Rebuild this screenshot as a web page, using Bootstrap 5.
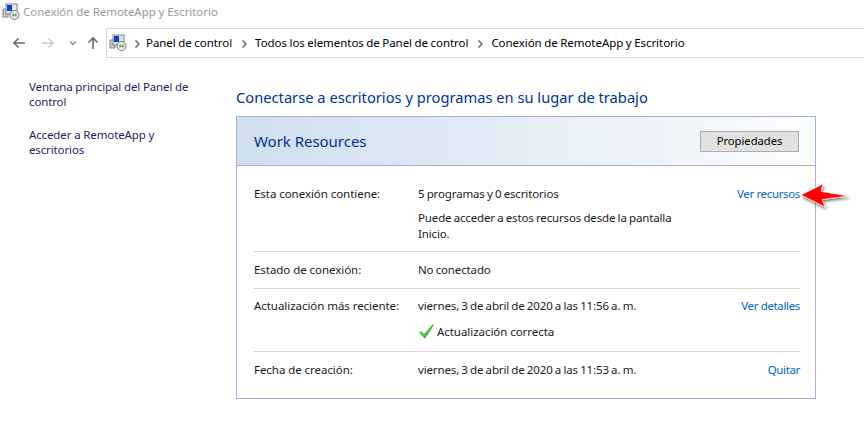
<!DOCTYPE html>
<html lang="es"><head><meta charset="utf-8"><title>Conexión de RemoteApp y Escritorio</title>
<link href="https://cdn.jsdelivr.net/npm/bootstrap@5.3.0/dist/css/bootstrap.min.css" rel="stylesheet">
<style>
html,body{width:864px;height:435px;overflow:hidden;background:#fff}
body{font-family:"Noto Sans","Open Sans",sans-serif;font-size:11.5px;line-height:15px;color:#1a1a1a;letter-spacing:-.05px}
.win-title{height:28px;padding:3px 0 0 2px;color:#9a9a9a;font-size:11.5px;gap:3px;align-items:flex-start}
.win-title span{padding-top:1px}
.nav-strip{height:30px;padding-left:11px}
.nav-btn{width:16px;height:16px;flex:none}
.fwd-btn{margin-left:13px}.drop-btn{margin-left:9px}.up-btn{margin-left:4px}
.addr{border:1px solid #d9d9d9;border-right:0;height:30px;margin-left:5px;padding-left:2px;flex:1;color:#000;font-size:11.5px;word-spacing:-.4px;padding-bottom:1px}
.crumb-sep{width:23px;text-align:center;flex:none}
.crumb-first{width:19px}
.side{width:236px;flex:none;padding:21px 30px 0 29px;color:#2a1a6a;letter-spacing:-.13px}
.side p{margin:0 0 18px}
.main-col{width:580px;flex:none;padding-top:29px}
.head-line{font-size:14.7px;line-height:20px;color:#003399;margin-bottom:9px;letter-spacing:0}
.panel-box{border:1px solid #a9aedb;height:283px;position:relative}
.panel-head{height:49px;border-bottom:1px solid #a9aedb;background:linear-gradient(90deg,#cfdeee,#fbfcfe);padding:0 16px 0 17px}
.panel-name{font-size:15px;color:#003399;letter-spacing:-.03px}
.prop-btn{width:99px;height:21px;border:1px solid #adadad;background:#e1e1e1;color:#000;border-radius:0;padding:0;font-size:11.2px;line-height:18px}
.info-list{padding:0 15px 0 17px}
.info-row{border-bottom:1px solid #d4d4d4;display:grid;grid-template-columns:164px 282px 1fr}
.info-row:last-child{border-bottom:0}
.r1{height:86px;padding-top:20px}.r2{height:37px;padding-top:10px}.r3{height:63px;padding-top:9px}.r4{padding-top:10px}
.info-row p{margin:0}
.mid-text{word-spacing:-.6px;letter-spacing:-.14px}
.gap-line{margin-top:9px!important;line-height:16px}
.act{text-align:right;letter-spacing:-.35px}
.act a{color:#0066cc;text-decoration:none}
.ok-line{display:flex;align-items:center;gap:2px;margin-top:10px!important;margin-left:-5px;word-spacing:0;letter-spacing:-.05px}
.red-arrow{position:absolute;left:563px;top:64px}
</style></head><body>
<div class="win-title d-flex">
<svg width="18" height="18" viewBox="0 0 18 18"><rect x="1" y="6" width="5" height="8" fill="#c9c9c9" stroke="#888"/><rect x="4" y="1" width="11" height="10" fill="#dfe6ef" stroke="#7a8494"/><rect x="5" y="2" width="5" height="6" fill="#1240b8"/><circle cx="12.500" cy="12" r="4.500" fill="#eee" stroke="#777"/><path d="M10 12h1.500M15 12h-1.500M11 10.500l1 1.500-1 1.500M14 10.500l-1 1.500 1 1.500" fill="none" stroke="#2f9e2f"/></svg>
<span>Conexión de RemoteApp y Escritorio</span></div>
<div class="nav-strip d-flex align-items-center">
<svg class="nav-btn" viewBox="0 0 16 16"><path d="M14 8H3M7.500 3.500 3 8l4.500 4.500" fill="none" stroke="#6b6b6b" stroke-width="1.600"/></svg>
<svg class="nav-btn fwd-btn" viewBox="0 0 16 16"><path d="M2 8h11M8.500 3.500 13 8l-4.500 4.500" fill="none" stroke="#c9c9c9" stroke-width="1.600"/></svg>
<svg class="nav-btn drop-btn" viewBox="0 0 16 16"><path d="M5 6.500l3 3 3-3" fill="none" stroke="#8a8a8a" stroke-width="1.300"/></svg>
<svg class="nav-btn up-btn" viewBox="0 0 16 16"><path d="M8 14V3M3.500 7.500 8 3l4.500 4.500" fill="none" stroke="#6b6b6b" stroke-width="1.600"/></svg>
<div class="addr d-flex align-items-center">
<svg width="18" height="18" viewBox="0 0 18 18"><rect x="1" y="6" width="5" height="8" fill="#c9c9c9" stroke="#888"/><rect x="4" y="1" width="11" height="10" fill="#dfe6ef" stroke="#7a8494"/><rect x="5" y="2" width="5" height="6" fill="#1240b8"/><circle cx="12.500" cy="12" r="4.500" fill="#eee" stroke="#777"/><path d="M10 12h1.500M15 12h-1.500M11 10.500l1 1.500-1 1.500M14 10.500l-1 1.500 1 1.500" fill="none" stroke="#2f9e2f"/></svg>
<span class="crumb-sep crumb-first"><svg width="6" height="8" viewBox="0 0 6 8"><path d="M1.500 .5 5 4 1.500 7.500" fill="none" stroke="#666" stroke-width="1.500"/></svg></span>
<span>Panel de control</span>
<span class="crumb-sep"><svg width="6" height="8" viewBox="0 0 6 8"><path d="M1.500 .5 5 4 1.500 7.500" fill="none" stroke="#666" stroke-width="1.500"/></svg></span>
<span>Todos los elementos de Panel de control</span>
<span class="crumb-sep"><svg width="6" height="8" viewBox="0 0 6 8"><path d="M1.500 .5 5 4 1.500 7.500" fill="none" stroke="#666" stroke-width="1.500"/></svg></span>
<span>Conexión de RemoteApp y Escritorio</span>
</div></div>
<div class="d-flex">
<div class="side"><p>Ventana principal del Panel de control</p><p>Acceder a RemoteApp y escritorios</p></div>
<div class="main-col">
<div class="head-line">Conectarse a escritorios y programas en su lugar de trabajo</div>
<div class="panel-box">
<div class="panel-head d-flex align-items-center justify-content-between"><span class="panel-name">Work Resources</span><button class="btn prop-btn" type="button">Propiedades</button></div>
<div class="info-list">
<div class="info-row r1"><div>Esta conexión contiene:</div><div class="mid-text"><p>5 programas y 0 escritorios</p><p class="gap-line">Puede acceder a estos recursos desde la pantalla Inicio.</p></div><div class="act"><a href="#">Ver recursos</a></div></div>
<div class="info-row r2"><div>Estado de conexión:</div><div class="mid-text">No conectado</div><div></div></div>
<div class="info-row r3"><div>Actualización más reciente:</div><div class="mid-text"><p>viernes, 3 de abril de 2020 a las 11:56 a. m.</p><p class="ok-line"><svg width="17" height="17" viewBox="0 0 17 17"><path d="M1 9.500 3 8l3 3L15 1l1 1-9 14z" fill="#55b84f"/></svg><span>Actualización correcta</span></p></div><div class="act"><a href="#">Ver detalles</a></div></div>
<div class="info-row r4"><div>Fecha de creación:</div><div class="mid-text">viernes, 3 de abril de 2020 a las 11:53 a. m.</div><div class="act"><a href="#">Quitar</a></div></div>
</div>
<svg class="red-arrow" width="54" height="34" viewBox="0 0 54 34"><defs><filter id="sh" x="-20%" y="-20%" width="150%" height="150%"><feDropShadow dx="1" dy="2" stdDeviation="1.500" flood-color="#000" flood-opacity=".55"/></filter></defs><path d="M1 14 23 3l-2 7.500L48 15l-26 3.500 3 7.500z" fill="#f00" stroke="#fff" stroke-width=".6" filter="url(#sh)"/></svg>
</div></div></div>
</body></html>
